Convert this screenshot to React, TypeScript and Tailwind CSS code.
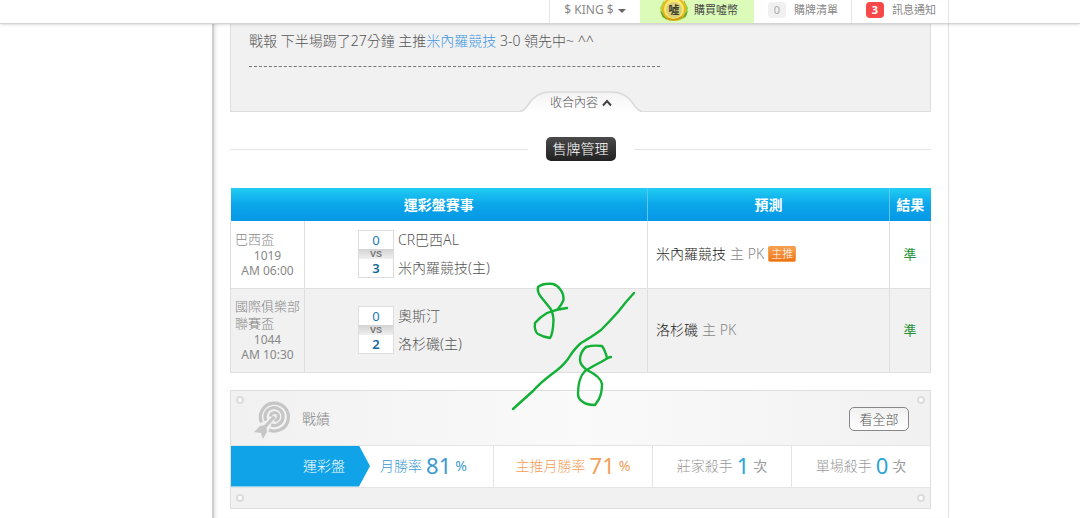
import clsx from "clsx";

type Match = {
  league: string;
  no: string;
  time: string;
  away: string;
  home: string;
  awayScore: number;
  homeScore: number;
  pick: string;
  isMain: boolean;
  result: string;
};

const matches: Match[] = [
  {
    league: "巴西盃",
    no: "1019",
    time: "AM 06:00",
    away: "CR巴西AL",
    home: "米內羅競技(主)",
    awayScore: 0,
    homeScore: 3,
    pick: "米內羅競技",
    isMain: true,
    result: "準",
  },
  {
    league: "國際俱樂部聯賽盃",
    no: "1044",
    time: "AM 10:30",
    away: "奧斯汀",
    home: "洛杉磯(主)",
    awayScore: 0,
    homeScore: 2,
    pick: "洛杉磯",
    isMain: false,
    result: "準",
  },
];

function CoinIcon() {
  return (
    <svg width="32" height="23" viewBox="0 0 32 23" aria-hidden="true">
      <path d="M6 0 L2 8 L4 17 L12 21 L8 12 Z" fill="#a8d84a" />
      <path d="M26 0 L30 8 L28 17 L20 21 L25 12 Z" fill="#9bcb3c" />
      <path d="M2 11 L7 14 L9 20 L5 17 Z M30 11 L26 14 L23 19 L28 16 Z" fill="#5fa52e" />
      <ellipse cx="16" cy="9" rx="12" ry="12" fill="#e8b820" />
      <ellipse cx="16" cy="9" rx="10" ry="10" fill="#f9ea6a" />
      <ellipse cx="16" cy="10" rx="8" ry="8" fill="#d9cf78" />
      <path d="M8 18 Q16 22 24 17" fill="none" stroke="#c99a10" strokeWidth="1.5" />
      <text x="16" y="14" textAnchor="middle" fontSize="11" fontWeight="700" fill="#3c4030">
        噓
      </text>
    </svg>
  );
}

function TargetIcon() {
  return (
    <svg width="40" height="42" viewBox="0 0 40 42" aria-hidden="true">
      <g fill="none" stroke="#c6c6c6" strokeWidth="3.2">
        <path d="M7.500 24.500 A14 14 0 1 1 15 32" />
        <path d="M12 22.500 A9 9 0 1 1 17 27" />
        <path d="M16.500 18.500 A4 4 0 1 1 20.500 22.500" />
        <path d="M20.500 18.500 L9 31" />
      </g>
      <path d="M0 34 L6 28 L12 27 L13 34 L9 41 L7 35 Z" fill="#c6c6c6" />
    </svg>
  );
}

function Screw() {
  return <span className="block size-2 rounded-full border-2 border-[#dcdcdc] bg-white" />;
}

function Header() {
  return (
    <header className="relative z-10 flex h-6 justify-end border-b border-[#d4d4d4] bg-white pr-[131px] text-[11px] leading-5 font-normal text-[#888] shadow-sm">
      <button type="button" className="flex w-[91px] items-start justify-center border-l border-[#e5e5e5] text-xs leading-5">
        $ KING $
        <span className="mt-[9px] ml-1 border-x-4 border-t-4 border-x-transparent border-t-[#666]" />
      </button>
      <a href="#buy" className="flex w-[114px] items-start gap-1 bg-[#dcfbb9] pl-[18px] text-[#444]">
        <CoinIcon />
        購買噓幣
      </a>
      <a href="#list" className="flex w-[97px] items-start gap-2 pl-3.5">
        <span className="mt-0.5 w-[18px] rounded-sm bg-[#f0f0f0] text-center leading-4 text-[#aaa]">0</span>
        購牌清單
      </a>
      <a href="#news" className="flex w-[98px] items-start gap-2 border-x border-[#e5e5e5] pl-3.5">
        <span className="mt-0.5 w-[18px] rounded-sm bg-[#f7484a] text-center leading-4 font-bold text-white">3</span>
        訊息通知
      </a>
    </header>
  );
}

function Report() {
  return (
    <section className="relative h-[88px] border border-t-0 border-[#dedede] bg-[#f1f1f1] px-[18px] pt-1 text-sm leading-[26px] text-[#555]">
      <p>
        戰報 下半場踢了27分鐘 主推<a href="#team" className="text-[#3f97e0]">米內羅競技</a> 3-0 領先中~ ^^
      </p>
      <div className="mt-3 w-[411px] border-t border-dashed border-[#777]" />
      <button type="button" className="absolute -bottom-px left-[289px] h-[21px] w-[122px] text-xs leading-6 text-[#555]">
        <svg className="absolute inset-0" width="122" height="21" viewBox="0 0 122 21" aria-hidden="true">
          <defs>
            <linearGradient id="tab" x1="0" y1="0" x2="0" y2="1">
              <stop offset="0" stopColor="#f3f3f3" />
              <stop offset="1" stopColor="#fff" />
            </linearGradient>
          </defs>
          <path d="M0 21 Q4 20 8 14 Q16 1 30 1 H92 Q106 1 114 14 Q118 20 122 21 Z" fill="url(#tab)" />
          <path d="M0 20.500 Q4 20 8 14 Q16 1 30 1 H92 Q106 1 114 14 Q118 20 122 20.500" fill="none" stroke="#dadada" strokeWidth="1.500" />
        </svg>
        <span className="relative flex items-center justify-center gap-1">
          收合內容
          <svg width="10" height="8" viewBox="0 0 10 8" aria-hidden="true">
            <path d="M1 6.500 L5 2 L9 6.500" fill="none" stroke="#444" strokeWidth="2" />
          </svg>
        </span>
      </button>
    </section>
  );
}

function ScoreBox({ away, home }: { away: number; home: number }) {
  return (
    <div className="w-9 border border-[#ddd] bg-white text-center text-[13px] font-normal text-[#1b7ab0]">
      <div className="leading-[18px]">{away}</div>
      <div className="bg-linear-to-b from-[#d2d2d2] to-[#f0f0f0] font-['Liberation_Sans',sans-serif] text-[9px] leading-[10px] font-bold text-[#777]">VS</div>
      <div className="leading-[18px] font-semibold text-[#15689c]">{home}</div>
    </div>
  );
}

function MatchTable() {
  return (
    <div className="relative mt-[27px]">
      <table className="w-full table-fixed border-collapse text-sm text-[#555]">
        <colgroup>
          <col className="w-[74px]" />
          <col />
          <col className="w-[242px]" />
          <col className="w-[41px]" />
        </colgroup>
        <thead>
          <tr className="h-[33px] bg-linear-to-b from-[#22cdf3] via-[#0aa6ea] to-[#0797e6] text-white">
            <th colSpan={2} className="p-0 font-bold">運彩盤賽事</th>
            <th className="border-l border-[#5cc8f3] p-0 font-bold">預測</th>
            <th className="border-l border-[#5cc8f3] p-0 font-bold">結果</th>
          </tr>
        </thead>
        <tbody>
          {matches.map((m, i) => (
            <tr key={m.no} className={clsx("border-x border-b border-[#dfdfdf]", i % 2 === 0 ? "h-[67px] bg-white" : "h-[84px] bg-[#f1f1f1]")}>
              <td className="border-r border-[#dfdfdf] py-0 pr-1 pl-1 text-[13px] leading-[17px] text-[#888]">
                {m.league}
                <div className="text-center text-xs leading-[15px] font-normal">
                  {m.no}
                  <br />
                  {m.time}
                </div>
              </td>
              <td className="p-0 pl-[53px]">
                <div className="flex items-center gap-1">
                  <ScoreBox away={m.awayScore} home={m.homeScore} />
                  <div className="leading-7">
                    <div>{m.away}</div>
                    <div>{m.home}</div>
                  </div>
                </div>
              </td>
              <td className="border-x border-[#dfdfdf] p-0 pl-2">
                <div className="flex items-center gap-1">
                  <span className="text-[#222]">{m.pick}</span>
                  <span className="text-[#888]">主 PK</span>
                  {m.isMain && (
                    <span className="rounded-xs border border-[#f0a050] bg-linear-to-b from-[#f7a04c] to-[#ef7413] px-0.5 text-[11px] leading-[14px] text-white">主推</span>
                  )}
                </div>
              </td>
              <td className="p-0 text-center text-[13px] font-normal text-[#25933a]">{m.result}</td>
            </tr>
          ))}
        </tbody>
      </table>

      {/* hand drawn tally on top of the table */}
      <svg className="pointer-events-none absolute top-[92px] left-[280px]" width="130" height="134" viewBox="0 0 130 134" fill="none" stroke="#12b035" strokeWidth="2.400" strokeLinecap="round" strokeLinejoin="round" aria-hidden="true">
        <path d="M48 29 Q52 24 53.500 20 Q54 14 50 9 Q47 5 43 4 Q33 3 28 7 Q27 12 31 17 L40 28 Q43 32 43.500 40 Q43 54 40 58 Q33 57 28 54 Q24 51 25 43 Q30 37 37 33 Q47 29 57 28" />
        <path d="M124 13 L116 22 L108 32 Q99 42 91 50 Q80 58 71 63 Q64 69 58 79 Q52 87 42 94 Q30 103 23 111 L3 129" />
        <path d="M101 77 L97 78 Q95 70 92 66 Q83 65 76 67 Q70 72 70 80 Q70 85 77 90 Q91 97 92 104 Q92 113 89 119 L85 125 Q77 125 73 122 Q68 119 68 114 Q68 98 75 91 Q83 86 91 82 L98 78" />
      </svg>
    </div>
  );
}

type StatProps = {
  label: string;
  value: number;
  unit: string;
  className: string;
  valueClass?: string;
};

function Stat({ label, value, unit, className, valueClass }: StatProps) {
  return (
    <div className={clsx("flex items-center justify-center gap-1 border-r border-[#e4e4e4]", className)}>
      <span>{label}</span>
      <span className={clsx("text-[22px] font-normal", valueClass)}>{value}</span>
      <span className="font-normal">{unit}</span>
    </div>
  );
}

function Record() {
  return (
    <section className="mt-[17px] border border-[#dedede] bg-[#f1f1f1] text-sm">
      <div className="flex h-[54px] items-start justify-between bg-linear-to-r from-[#f1f1f1] via-[#fafafa] to-[#f1f1f1] px-[5px] pt-[5px]">
        <Screw />
        <div className="ml-2.5 flex flex-1 items-center gap-2 pt-0.5 text-[#888]">
          <TargetIcon />
          <h2>戰績</h2>
        </div>
        <button type="button" className="mt-[11px] mr-2 h-6 w-[60px] rounded-[5px] border border-[#888] bg-linear-to-b from-[#f1f1f1] to-white text-[13px] leading-5 text-[#555]">
          看全部
        </button>
        <Screw />
      </div>
      <div className="flex h-[43px] border-y border-[#e4e4e4] bg-white">
        <div className="flex w-[139px] items-center bg-[#10a3e8] pl-[72px] text-white [clip-path:polygon(0_0,128px_0,100%_50%,128px_100%,0_100%)]">
          運彩盤
        </div>
        <Stat label="月勝率" value={81} unit="%" className="w-[124px] pr-4 text-[#3a9ad0]" />
        <Stat label="主推月勝率" value={71} unit="%" className="w-[159px] text-[#f2a05a]" />
        <Stat label="莊家殺手" value={1} unit="次" className="w-[139px] text-[#999]" valueClass="text-[#28a5d8]" />
        <Stat label="單場殺手" value={0} unit="次" className="flex-1 border-r-0 text-[#999]" valueClass="text-[#28a5d8]" />
      </div>
      <div className="flex h-5 items-center justify-between px-[5px]">
        <Screw />
        <Screw />
      </div>
    </section>
  );
}

export default function App() {
  return (
    <div className="flex min-h-screen flex-col bg-white font-['Noto_Sans','Noto_Sans_CJK_TC',sans-serif] font-light">
      <Header />
      <main className="mr-[131px] ml-[212px] flex-1 border-r border-l-2 border-r-[#e2e2e2] border-l-[#cfcfcf] pr-[17px] pl-4 shadow-[inset_4px_0_4px_-3px_#ddd]">
        <Report />
        <div className="mt-[25px] flex items-center gap-[18px]">
          <div className="flex-1 border-t border-[#e3e3e3]" />
          <h2 className="rounded-[5px] bg-linear-to-b from-[#4a4a4a] to-[#222] px-[7px] text-sm leading-6 text-white">售牌管理</h2>
          <div className="flex-1 border-t border-[#e3e3e3]" />
        </div>
        <MatchTable />
        <Record />
      </main>
    </div>
  );
}
